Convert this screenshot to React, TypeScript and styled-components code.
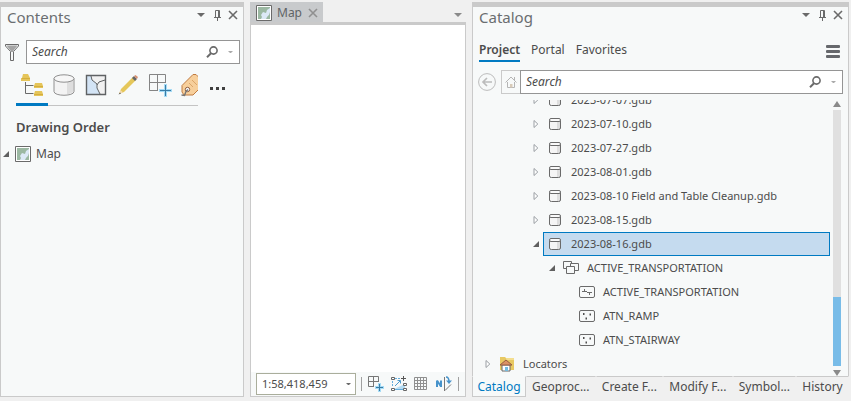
import React from "react";
import styled, { createGlobalStyle } from "styled-components";

const GlobalStyle = createGlobalStyle`
  * { box-sizing: border-box; }
  body { margin: 0; background: #f0f0f0; }
  body, button, input, select {
    font-family: "Noto Sans", "Open Sans", sans-serif;
    font-size: 12px;
    line-height: 16px;
    color: #4c4c4c;
  }
  button { border: 0; padding: 0; margin: 0; background: none; }
  svg { display: block; flex: none; }
`;

const Workspace = styled.main`
  display: grid;
  grid-template-columns: 244px minmax(0, 1fr) 377px;
  gap: 6px;
  height: 100vh;
  padding: 2px 2px 4px 0;
`;
const Column = styled.section`
  display: flex;
  flex-direction: column;
  min-width: 0;
  min-height: 0;
`;
const Pane = styled(Column)<{ $open?: boolean }>`
  flex: 1;
  background: #f7f9f9;
  border: 1px solid #cacaca;
  border-top: 5px solid #cacaca;
  border-bottom-width: ${(p) => (p.$open ? 0 : 1)}px;
`;
const TitleBar = styled.header`
  display: flex;
  align-items: flex-start;
  justify-content: space-between;
  padding: 0 4px 0 6px;
`;
const Title = styled.h2`
  margin: 0;
  font-size: 15px;
  line-height: 20px;
  font-weight: 400;
  color: #6a6e70;
`;
const WindowButtons = styled.div`
  display: flex;
  align-items: center;
  gap: 4px;
  padding-top: 2px;
`;
const IconButton = styled.button`
  display: flex;
  align-items: center;
  justify-content: center;
  width: 12px;
  height: 12px;
`;
const SearchRow = styled.div<{ $gap: number; $right: number }>`
  display: flex;
  align-items: center;
  gap: ${(p) => p.$gap}px;
  padding: 0 ${(p) => p.$right}px 0 5px;
`;
const SearchGroup = styled.div`
  display: flex;
  flex: 1;
  min-width: 0;
`;
const SearchBox = styled.div`
  display: flex;
  flex: 1;
  align-items: center;
  gap: 6px;
  min-width: 0;
  height: 24px;
  padding: 0 3px 0 5px;
  background: #fff;
  border: 1px solid #959595;
`;
const SearchInput = styled.input`
  flex: 1;
  min-width: 0;
  padding: 0;
  border: 0;
  outline: 0;
  background: transparent;
  font-style: italic;
  &::placeholder { color: #4c4c4c; opacity: 1; }
`;
const HomeButton = styled.button`
  display: flex;
  align-items: center;
  justify-content: center;
  width: 19px;
  height: 24px;
  border: 1px solid #cacaca;
  border-right: 0;
`;
const ContentsSearch = styled.div`
  padding-top: 13px;
`;
const ViewStrip = styled.nav`
  display: flex;
  align-items: flex-start;
  margin: 6px 0 0 15px;
`;
const ViewTabs = styled.div`
  display: flex;
  width: 182px;
  overflow: hidden;
  box-shadow: inset 0 -1px #c4c4c4;
`;
const ViewTab = styled.button<{ $active?: boolean }>`
  display: flex;
  flex: none;
  justify-content: center;
  width: 32px;
  height: 36px;
  padding-top: 3px;
  border-bottom: 3px solid ${(p) => (p.$active ? "#007ac2" : "transparent")};
`;
const MoreButton = styled.button`
  display: flex;
  align-items: center;
  height: 36px;
  padding-left: 12px;
`;
const Heading = styled.h3`
  margin: 12px 0 0 15px;
  font-size: 13px;
  line-height: 18px;
  font-weight: 600;
`;
const LayerRow = styled.div`
  display: flex;
  align-items: center;
  gap: 5px;
  height: 24px;
  margin-top: 6px;
  padding-left: 1px;
`;
const Expander = styled.button`
  display: flex;
  flex: none;
  align-items: center;
  justify-content: center;
  width: 14px;
  height: 16px;
`;
const SmallExpander = styled(Expander)`
  width: 8px;
`;

const DocTabs = styled.div`
  display: flex;
  align-items: center;
  justify-content: space-between;
  height: 20px;
  padding-right: 2px;
`;
const DocTab = styled.div`
  display: flex;
  align-items: center;
  gap: 5px;
  height: 20px;
  padding: 2px 4px 0 6px;
  background: #c8cacc;
  color: #5f6466;
`;
const ViewsButton = styled(IconButton)`
  height: 20px;
  padding-top: 5px;
`;
const MapView = styled.div`
  display: flex;
  flex: 1;
  flex-direction: column;
  justify-content: flex-end;
  background: #fff;
  border: 1px solid #cacaca;
  border-top-width: 3px;
`;
const MapFooter = styled.footer`
  display: flex;
  align-items: center;
  gap: 5px;
  height: 24px;
  padding: 0 6px 0 5px;
  background: #f7f9f9;
`;
const ScaleBox = styled.div`
  display: grid;
  grid-template-columns: minmax(0, 1fr) 12px;
  align-items: center;
  width: 100px;
  height: 22px;
  background: #fff;
  border: 1px solid #aaae9c;
`;
const ScaleSelect = styled.select`
  grid-area: 1 / 1 / 2 / 3;
  height: 20px;
  padding: 0 0 0 5px;
  border: 0;
  background: transparent;
  appearance: none;
  font-size: 11px;
`;
const ScaleArrow = styled.span`
  grid-area: 1 / 2;
  padding-left: 3px;
  pointer-events: none;
`;
const Separator = styled.span`
  width: 1px;
  height: 14px;
  background: #a0a0a0;
`;
const MapTools = styled.div`
  display: flex;
  flex: 1;
  justify-content: space-between;
`;
const MapTool = styled.button`
  width: 18px;
  height: 18px;
`;

const CatalogNav = styled.nav`
  display: flex;
  align-items: flex-start;
  gap: 11px;
  height: 22px;
  margin: 13px 8px 0 6px;
`;
const CatalogLink = styled.a<{ $active?: boolean }>`
  height: 22px;
  line-height: 20px;
  text-decoration: none;
  color: #4c4c4c;
  font-weight: ${(p) => (p.$active ? 600 : 400)};
  border-bottom: 2px solid ${(p) => (p.$active ? "#007ac2" : "transparent")};
`;
const MenuButton = styled.button`
  margin: 5px 0 0 auto;
`;
const CatalogSearch = styled.div`
  padding-top: 8px;
`;
const TreeArea = styled.div`
  display: flex;
  flex: 1;
  min-height: 0;
  margin-top: 6px;
`;
const Tree = styled.ul`
  display: flex;
  flex: 1;
  flex-direction: column;
  justify-content: flex-end;
  min-width: 0;
  margin: 0;
  padding: 0 0 0 8px;
  overflow: hidden;
  list-style: none;
  font-size: 11px;
`;
const TreeRow = styled.li<{ $depth: number }>`
  display: flex;
  flex: none;
  align-items: center;
  height: 24px;
  padding-left: ${(p) => p.$depth * 16}px;
`;
const TreeLabel = styled.span<{ $selected?: boolean }>`
  display: flex;
  flex: 1;
  align-items: center;
  gap: 8px;
  height: 24px;
  padding-left: 3px;
  white-space: nowrap;
  border: 1px solid ${(p) => (p.$selected ? "#007ac2" : "transparent")};
  background: ${(p) => (p.$selected ? "#c5dbef" : "transparent")};
`;
const ScrollBar = styled.div`
  display: flex;
  flex-direction: column;
  align-items: center;
  width: 8px;
  margin: 0 7px 0 3px;
`;
const ScrollTrack = styled.div`
  display: flex;
  flex: 1;
  align-items: flex-end;
  width: 8px;
  margin: 3px 0;
  background: #e0e0e0;
`;
const ScrollThumb = styled.div`
  width: 8px;
  height: 27%;
  background: #78bce8;
`;
const ScrollButton = styled.button`
  height: 7px;
`;
const DockTabs = styled.div`
  display: flex;
  height: 21px;
`;
const DockTab = styled.button<{ $active?: boolean }>`
  flex: ${(p) => (p.$active ? "0 0 54px" : "1 1 auto")};
  padding-left: ${(p) => (p.$active ? 0 : 5)}px;
  text-align: ${(p) => (p.$active ? "center" : "left")};
  line-height: 19px;
  white-space: nowrap;
  color: ${(p) => (p.$active ? "#007ac2" : "#4c4c4c")};
  background: ${(p) => (p.$active ? "#f7f9f9" : "transparent")};
  border: 1px solid ${(p) => (p.$active ? "#cacaca" : "transparent")};
  border-top-color: ${(p) => (p.$active ? "#f7f9f9" : "#cacaca")};
`;

const Caret = ({ color = "#6a6a6a", size = 8 }) => (
  <svg width={size} height={size / 2} viewBox="0 0 8 4"><path d="M0 0h8L4 4z" fill={color} /></svg>
);
const Pin = () => (
  <svg width="9" height="11" viewBox="0 0 9 11" fill="none" stroke="#6a6a6a">
    <path d="M2.500 7V.5h4V7M5.500 1v6M1 7.500h7M4.500 8v3" />
  </svg>
);
const Cross = ({ color = "#6a6a6a" }) => (
  <svg width="10" height="10" viewBox="0 0 10 10" stroke={color} strokeWidth="1.6"><path d="M1 1l8 8M9 1L1 9" /></svg>
);
const Magnifier = () => (
  <svg width="12" height="12" viewBox="0 0 12 12" fill="none" stroke="#6a6a6a">
    <circle cx="7.5" cy="4.5" r="3.6" strokeWidth="1.6" /><path d="M5 7.200L1 11.200" strokeWidth="2" />
  </svg>
);
const Funnel = () => (
  <svg width="14" height="17" viewBox="0 0 14 17" fill="#f7f9f9" stroke="#6a6a6a">
    <path d="M.5.5h13v1.500l-5 5.500v9h-3v-9L.5 2z" /><path d="M1.500 1.500h11L8.500 6.500V8h-3V6.500z" fill="#a5a5a5" stroke="none" />
  </svg>
);
const MapThumb = () => (
  <svg width="16" height="16" viewBox="0 0 16 16">
    <path d="M.5.5h15v15H.5z" fill="#fff" stroke="#6a6a6a" />
    <path d="M2 2h12v12H2z" fill="#9bb8a2" />
    <path d="M14 3v4l-1 3-2 2-1 2H5l1-2-1-2 2-3 3 1 1-3z" fill="#dce9f7" />
    <path d="M11 14l1-3 2-1v4z" fill="#9bb8a2" />
  </svg>
);
const OrderIcon = () => (
  <svg width="24" height="24" viewBox="0 0 24 24">
    <path d="M5.500 9v11.500h8M5.500 12.500h8" fill="none" stroke="#6a6a6a" />
    <g fill="#e5c55a">
      <path d="M3 1h5l2 4v3H1V5h1zM15 10h7l1 3v2h-9v-2zM15 18h7l1 3v2h-9v-2z" />
    </g>
    <path d="M2 5.500h8M14 13.500h9M14 21.500h9" stroke="#d4ae3e" />
  </svg>
);
const DrumIcon = () => (
  <svg width="24" height="24" viewBox="0 0 24 24">
    <path d="M2 5.500v13c0 5 20 5 20 0v-13" fill="#f3f3f3" />
    <path d="M15 8l6-2v13l-6 3z" fill="#dedede" />
    <path d="M2 5.500v13c0 5 20 5 20 0v-13" fill="none" stroke="#909090" />
    <ellipse cx="12" cy="5.500" rx="10" ry="3.700" fill="#f7f7f7" stroke="#909090" />
  </svg>
);
const SelectionIcon = () => (
  <svg width="24" height="24" viewBox="0 0 24 24" fill="none" stroke="#5f6264">
    <path d="M2.500 2.500h19v19h-19z" fill="#f1f1f1" />
    <path d="M3 3h4l1 4 4 3 1 5 3 6H3z" fill="#d3e4f5" stroke="none" />
    <path d="M7 3l1 4 5 4v4l3 6M13 12l2-3 6-2" /><path d="M2.500 2.500h19v19h-19z" strokeWidth="1.400" />
  </svg>
);
const PencilIcon = () => (
  <svg width="24" height="24" viewBox="0 0 24 24">
    <path d="M3 21l2-5L17 4l3 3L8 19z" fill="#e5c75b" /><path d="M3 21l1.500-4L7 19.500z" fill="#f3dcb3" />
    <path d="M2.500 21.500l1.500-2 1 1z" fill="#555" /><path d="M16 5l2-2 3 3-2 2z" fill="#666" />
    <path d="M18 3l1.500-1 2.500 2-1 2z" fill="#d99273" />
  </svg>
);
const GridPlusIcon = () => (
  <svg width="24" height="24" viewBox="0 0 24 24" fill="none">
    <path d="M1.500 1.500h16v16h-16zM9.500 1.500v16M1.500 9.500h16" stroke="#858585" />
    <path d="M17.500 10v14M10 17.500h14" stroke="#f7f9f9" strokeWidth="5" />
    <path d="M17.500 11v13M11 17.500h13" stroke="#a6dcf6" strokeWidth="3" />
    <path d="M17.500 12v11M12 17.500h11" stroke="#3a7ca5" />
  </svg>
);
const SnapIcon = () => (
  <svg width="18" height="18" viewBox="0 0 18 18" fill="none">
    <path d="M1.500 1.500h10v10h-10zM6.500 1.500v10M1.500 6.500h10" stroke="#777" />
    <path d="M12.500 7v10M7 12.500h10" stroke="#f7f9f9" strokeWidth="5" />
    <path d="M12.500 8v9M8 12.500h9" stroke="#a6dcf6" strokeWidth="3" />
    <path d="M12.500 9v7M9 12.500h7" stroke="#3a7ca5" />
  </svg>
);
const TagIcon = () => (
  <svg width="24" height="24" viewBox="0 0 24 24">
    <path d="M2 12.500L13 1.500h3l6 6V13l-9 9H4l-2-3z" fill="#f7cf9b" stroke="#c07b40" />
    <path d="M9 10l4 4M12 7l5 5" fill="none" stroke="#dca66a" />
    <circle cx="7.500" cy="16.500" r="2.200" fill="#fff" stroke="#8b5a3c" />
    <path d="M1.500 22l3 .5 1.500-4 2-2" fill="none" stroke="#777" strokeWidth="1.400" />
  </svg>
);
const Dots = () => (
  <svg width="16" height="3" viewBox="0 0 16 3" fill="#404040"><path d="M0 0h3v3H0zM6 0h3v3H6zM12 0h3v3h-3z" /></svg>
);
const Expanded = () => (
  <svg width="6" height="6" viewBox="0 0 6 6"><path d="M6 0v6H0z" fill="#606060" /></svg>
);
const Collapsed = () => (
  <svg width="6" height="10" viewBox="0 0 6 10"><path d="M1 1.500v7L4.800 5z" fill="#fff" stroke="#9a9fa4" /></svg>
);
const GdbIcon = () => (
  <svg width="16" height="16" viewBox="0 0 16 16">
    <path d="M2.500 4.500V12q0 1.500 2 1.500h7q2 0 2-1.500V4.500z" fill="#f5f5f5" /><path d="M10 5h3v8h-3z" fill="#dedede" />
    <path d="M2.500 4.500V12q0 1.500 2 1.500h7q2 0 2-1.500V4.500" fill="none" stroke="#6a6a6a" />
    <rect x="2.500" y="2.500" width="11" height="3" rx="1.500" fill="#fafafa" stroke="#6a6a6a" />
  </svg>
);
const DatasetIcon = () => (
  <svg width="16" height="16" viewBox="0 0 16 16" fill="#f7f9f9" stroke="#6a6a6a">
    <path d="M.500 1.500h8v7h-8z" /><path d="M7.500 3.500h8v7h-8z" /><path d="M3.500 6.500h8v7h-8z" />
  </svg>
);
const LineIcon = () => (
  <svg width="16" height="16" viewBox="0 0 16 16" fill="none" stroke="#6a6a6a">
    <rect x=".5" y="2.500" width="15" height="11" rx="1.500" /><path d="M3 7.500h5M5.500 5v3M8 8.500h5M10.500 8.500V11" />
  </svg>
);
const PointIcon = () => (
  <svg width="16" height="16" viewBox="0 0 16 16">
    <rect x=".5" y="2.500" width="15" height="11" rx="1.500" fill="none" stroke="#6a6a6a" />
    <path d="M4 5h1.500v2H4zM10.500 5.500H12v2h-1.500zM6.500 9.500H8v2H6.500z" fill="#505050" />
  </svg>
);
const LocatorIcon = () => (
  <svg width="16" height="16" viewBox="0 0 16 16">
    <path d="M1 3V1h5l1 1h8v12H1z" fill="#e8c963" /><path d="M7 3h8" stroke="#fff3bd" />
    <path d="M3 9h8v6H3z" fill="#fff" stroke="#666" /><path d="M1 9l6-5 6 5z" fill="#da9265" stroke="#965d40" />
    <path d="M6 11h3v4H6z" fill="#73bce0" />
  </svg>
);
const BackIcon = () => (
  <svg width="18" height="18" viewBox="0 0 18 18" fill="none" stroke="#bcbcbc">
    <circle cx="9" cy="9" r="8.400" /><path d="M14 9H5M9 5L5 9l4 4" strokeWidth="1.700" />
  </svg>
);
const HomeIcon = () => (
  <svg width="12" height="12" viewBox="0 0 12 12" fill="none" stroke="#b5b5b5">
    <path d="M.5 6.500L6 1l5.500 5.500M9.500 1v3M2.500 6v5.500h7V6" /><path d="M5 8h2.500v3.500H5z" fill="#d8cbb9" stroke="none" />
  </svg>
);
const Menu = () => (
  <svg width="14" height="13" viewBox="0 0 14 13" fill="#66686c">
    <rect width="14" height="3" rx="1" /><rect y="5" width="14" height="3" rx="1" /><rect y="10" width="14" height="3" rx="1" />
  </svg>
);
const ConstraintIcon = () => (
  <svg width="18" height="18" viewBox="0 0 18 18" fill="none">
    <path d="M3 14.500L15 9v5.500z" fill="#b5dcf3" /><path d="M3 14.500h12" stroke="#65addc" />
    <path d="M2.500 11V6M5 3.500h6" stroke="#65addc" strokeDasharray="2 1" /><path d="M5 11l5-5M7.500 5.500h3v3" stroke="#4c9acd" />
    <path d="M13.500 1v5M11 3.500h5" stroke="#555" />
    <path d="M1.500 2.500h3v2h-3zM1.500 13.500h3v2h-3zM13.500 8.500h3v2h-3zM13.500 13.500h3v2h-3z" fill="#fff" stroke="#666" />
  </svg>
);
const GridIcon = () => (
  <svg width="18" height="18" viewBox="0 0 18 18" fill="none" stroke="#8f8f8f">
    <path d="M2.500 2.500h12v12h-12zM5.500 2.500v12M8.500 2.500v12M11.500 2.500v12M2.500 5.500h12M2.500 8.500h12M2.500 11.500h12" />
  </svg>
);
const NorthIcon = () => (
  <svg width="18" height="18" viewBox="0 0 18 18" fill="none">
    <path d="M2 12V5.500M2 5.500l4 6M6 12V5.500" stroke="#4793cb" strokeWidth="2" />
    <path d="M9.500 2v14M10 15.500l6-6" stroke="#777" />
    <path d="M11 2q3 0 3 5" stroke="#4793cb" strokeWidth="1.500" /><path d="M11 5.500h6l-3 3.500z" fill="#4793cb" />
  </svg>
);

const icons = { gdb: GdbIcon, dataset: DatasetIcon, line: LineIcon, point: PointIcon, locator: LocatorIcon };
type Node = { name: string; depth: number; icon: keyof typeof icons; state?: "open" | "closed"; selected?: boolean };
const nodes: Node[] = [
  ...["2023-07-07.gdb", "2023-07-10.gdb", "2023-07-27.gdb", "2023-08-01.gdb", "2023-08-10 Field and Table Cleanup.gdb", "2023-08-15.gdb"].map(
    (name): Node => ({ name, depth: 3, icon: "gdb", state: "closed" })
  ),
  { name: "2023-08-16.gdb", depth: 3, icon: "gdb", state: "open", selected: true },
  { name: "ACTIVE_TRANSPORTATION", depth: 4, icon: "dataset", state: "open" },
  { name: "ACTIVE_TRANSPORTATION", depth: 5, icon: "line" },
  { name: "ATN_RAMP", depth: 5, icon: "point" },
  { name: "ATN_STAIRWAY", depth: 5, icon: "point" },
  { name: "Locators", depth: 0, icon: "locator", state: "closed" },
];
const views = [
  { name: "List by drawing order", icon: <OrderIcon /> },
  { name: "List by data source", icon: <DrumIcon /> },
  { name: "List by selection", icon: <SelectionIcon /> },
  { name: "List by editing", icon: <PencilIcon /> },
  { name: "List by snapping", icon: <GridPlusIcon /> },
  { name: "List by labeling", icon: <TagIcon /> },
];
const mapTools = [
  { name: "Snapping", icon: <SnapIcon /> },
  { name: "Constraints", icon: <ConstraintIcon /> },
  { name: "Grid", icon: <GridIcon /> },
  { name: "North correction", icon: <NorthIcon /> },
];

const PaneTitle = ({ text }: { text: string }) => (
  <TitleBar>
    <Title>{text}</Title>
    <WindowButtons>
      <IconButton aria-label="Options"><Caret /></IconButton>
      <IconButton aria-label="Auto hide"><Pin /></IconButton>
      <IconButton aria-label="Close"><Cross /></IconButton>
    </WindowButtons>
  </TitleBar>
);
const Search = ({ label }: { label: string }) => (
  <SearchBox>
    <SearchInput aria-label={label} placeholder="Search" />
    <IconButton aria-label="Search"><Magnifier /></IconButton>
    <IconButton aria-label="Search options"><Caret size={5} color="#aaa" /></IconButton>
  </SearchBox>
);

export default function App() {
  return (
    <>
      <GlobalStyle />
      <Workspace>
        <Pane>
          <PaneTitle text="Contents" />
          <ContentsSearch>
            <SearchRow $gap={8} $right={3}>
              <IconButton aria-label="Filter"><Funnel /></IconButton>
              <Search label="Search contents" />
            </SearchRow>
          </ContentsSearch>
          <ViewStrip>
            <ViewTabs>
              {views.map((v, i) => <ViewTab key={v.name} aria-label={v.name} $active={i === 0}>{v.icon}</ViewTab>)}
            </ViewTabs>
            <MoreButton aria-label="More"><Dots /></MoreButton>
          </ViewStrip>
          <Heading>Drawing Order</Heading>
          <LayerRow>
            <SmallExpander aria-label="Collapse Map"><Expanded /></SmallExpander>
            <MapThumb />
            <span>Map</span>
          </LayerRow>
        </Pane>

        <Column>
          <DocTabs>
            <DocTab>
              <MapThumb />
              <span>Map</span>
              <IconButton aria-label="Close Map"><Cross color="#909090" /></IconButton>
            </DocTab>
            <ViewsButton aria-label="Open views"><Caret color="#8a8a8a" /></ViewsButton>
          </DocTabs>
          <MapView>
            <MapFooter>
              <ScaleBox>
                <ScaleSelect aria-label="Map scale"><option>1:58,418,459</option></ScaleSelect>
                <ScaleArrow><Caret size={5} /></ScaleArrow>
              </ScaleBox>
              <Separator />
              <MapTools>
                {mapTools.map((t) => <MapTool key={t.name} aria-label={t.name}>{t.icon}</MapTool>)}
              </MapTools>
              <Separator />
            </MapFooter>
          </MapView>
        </Column>

        <Column>
          <Pane $open>
            <PaneTitle text="Catalog" />
            <CatalogNav>
              <CatalogLink href="#project" $active>Project</CatalogLink>
              <CatalogLink href="#portal">Portal</CatalogLink>
              <CatalogLink href="#favorites">Favorites</CatalogLink>
              <MenuButton aria-label="Menu"><Menu /></MenuButton>
            </CatalogNav>
            <CatalogSearch>
              <SearchRow $gap={5} $right={5}>
                <button aria-label="Back"><BackIcon /></button>
                <SearchGroup>
                  <HomeButton aria-label="Home"><HomeIcon /></HomeButton>
                  <Search label="Search catalog" />
                </SearchGroup>
              </SearchRow>
            </CatalogSearch>
            <TreeArea>
              <Tree>
                {nodes.map((n) => {
                  const Icon = icons[n.icon];
                  return (
                    <TreeRow key={n.name + n.depth} $depth={n.depth}>
                      {n.state ? (
                        <Expander aria-label={`Toggle ${n.name}`}>{n.state === "open" ? <Expanded /> : <Collapsed />}</Expander>
                      ) : (
                        <Expander as="span" />
                      )}
                      <TreeLabel $selected={n.selected}><Icon />{n.name}</TreeLabel>
                    </TreeRow>
                  );
                })}
              </Tree>
              <ScrollBar>
                <ScrollButton aria-label="Scroll up">
                  <svg width="8" height="6" viewBox="0 0 8 6"><path d="M4 0l4 6H0z" fill="#8a8a8a" /></svg>
                </ScrollButton>
                <ScrollTrack><ScrollThumb /></ScrollTrack>
                <ScrollButton aria-label="Scroll down">
                  <svg width="8" height="6" viewBox="0 0 8 6"><path d="M0 0h8L4 6z" fill="#8a8a8a" /></svg>
                </ScrollButton>
              </ScrollBar>
            </TreeArea>
          </Pane>
          <DockTabs>
            {["Catalog", "Geoproc...", "Create F...", "Modify F...", "Symbol...", "History"].map((name, i) => (
              <DockTab key={name} $active={i === 0}>{name}</DockTab>
            ))}
          </DockTabs>
        </Column>
      </Workspace>
    </>
  );
}
